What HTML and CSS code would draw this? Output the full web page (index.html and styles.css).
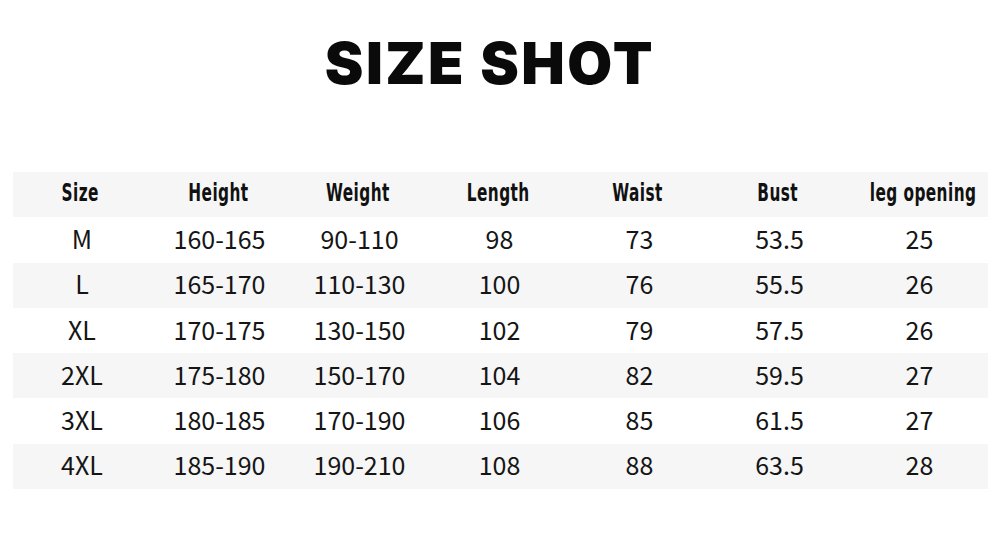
FILE: index.html
```html
<!DOCTYPE html>
<html>
<head>
<meta charset="utf-8">
<link rel="stylesheet" href="styles.css">
</head>
<body>
<div class="page">
  <h1 class="title">SIZE SHOT</h1>
  <table class="chart">
    <colgroup>
      <col class="c-first"><col><col><col><col><col><col>
    </colgroup>
    <thead>
      <tr class="shade"><th><span>Size</span></th><th><span>Height</span></th><th><span>Weight</span></th><th><span>Length</span></th><th><span>Waist</span></th><th><span>Bust</span></th><th><span>leg opening</span></th></tr>
    </thead>
    <tbody>
      <tr><td>M</td><td>160-165</td><td>90-110</td><td>98</td><td>73</td><td>53.5</td><td>25</td></tr>
      <tr class="shade"><td>L</td><td>165-170</td><td>110-130</td><td>100</td><td>76</td><td>55.5</td><td>26</td></tr>
      <tr><td>XL</td><td>170-175</td><td>130-150</td><td>102</td><td>79</td><td>57.5</td><td>26</td></tr>
      <tr class="shade"><td>2XL</td><td>175-180</td><td>150-170</td><td>104</td><td>82</td><td>59.5</td><td>27</td></tr>
      <tr><td>3XL</td><td>180-185</td><td>170-190</td><td>106</td><td>85</td><td>61.5</td><td>27</td></tr>
      <tr class="shade"><td>4XL</td><td>185-190</td><td>190-210</td><td>108</td><td>88</td><td>63.5</td><td>28</td></tr>
    </tbody>
  </table>
</div>
</body>
</html>
```

FILE: styles.css
```css
html, body {
  margin: 0;
  padding: 0;
  background: #ffffff;
}
.page {
  width: 1000px;
  height: 545px;
  padding-top: 30px;
  box-sizing: border-box;
}
.title {
  margin: 0;
  padding-right: 20px;
  text-align: center;
  font-family: "Inter", "Lato", "Liberation Sans", sans-serif;
  font-weight: 900;
  font-size: 58px;
  line-height: 66px;
  letter-spacing: 2.5px;
  color: #0a0a0a;
}
.chart {
  margin: 76px 0 0 13px;
  width: 975px;
  border-collapse: collapse;
  table-layout: fixed;
}
.c-first { width: 135px; }
.chart th, .chart td {
  box-sizing: border-box;
  padding: 0;
  height: 45.3px;
  line-height: 30px;
  text-align: center;
  vertical-align: middle;
  white-space: nowrap;
}
.chart th {
  font-family: "DejaVu Sans Condensed", "DejaVu Sans", sans-serif;
  font-weight: 700;
  font-size: 24px;
  letter-spacing: 0.6px;
  color: #111;
  padding-bottom: 3px;
}
.chart th span {
  display: inline-block;
  transform: scaleX(0.71);
}
.chart td {
  font-family: "Noto Sans CJK SC", "Noto Sans", sans-serif;
  font-size: 25px;
  color: #151515;
  padding-bottom: 4px;
  padding-left: 3px;
}
.shade {
  background: #f6f6f6;
}
```
